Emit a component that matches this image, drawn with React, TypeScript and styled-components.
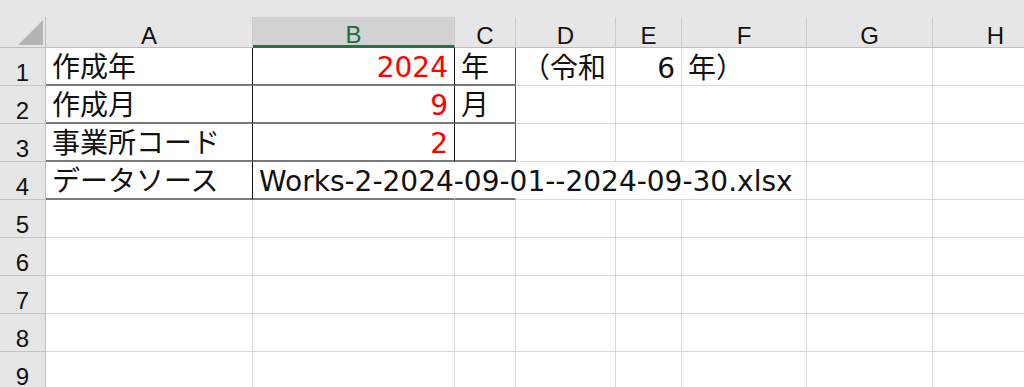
import React from 'react';
import styled, {createGlobalStyle, css} from "styled-components";

const GlobalStyle = createGlobalStyle`
  html, body {
    margin: 0;
    padding: 0;
    background: #ffffff;
    overflow: hidden;
  }
`

type Edge = "grid" | "black" | "dark" | "none" | "thick"

type CellDef = {
  text?: string
  align?: "left" | "right"
  red?: boolean
  r?: Edge
  b?: Edge
  spill?: boolean
}

const columns = ["A", "B", "C", "D", "E", "F", "G", "H"];
// H runs past the window edge, the window clips it
const colWidths = "46px 207px 202px 61px 100px 66px 125px 126px 126px";
const selectedCol = "B";

// only rows 1-4 carry content, the rest is empty grid
const rows: Record<number, CellDef[]> = {
  1: [
    {text: "作成年", r: "black", b: "thick"},
    {text: "2024", align: "right", red: true, r: "black", b: "thick"},
    {text: "年", r: "dark", b: "thick"},
    {text: "（令和"},
    {text: "6", align: "right"},
    {text: "年）"},
  ],
  2: [
    {text: "作成月", r: "black", b: "thick"},
    {text: "9", align: "right", red: true, r: "black", b: "thick"},
    {text: "月", r: "dark", b: "thick"},
  ],
  3: [
    {text: "事業所コード", r: "black", b: "thick"},
    {text: "2", align: "right", red: true, r: "black", b: "thick"},
    {text: "", r: "dark", b: "thick"},
  ],
  4: [
    {text: "データソース", r: "black", b: "thick"},
    {text: "Works-2-2024-09-01--2024-09-30.xlsx", spill: true, r: "none", b: "thick"},
    {r: "none", b: "thick"},
    {r: "none"},
    {r: "none"},
    {},
  ],
};

const App = () => {
  const rowNums = [1, 2, 3, 4, 5, 6, 7, 8, 9];

  return (
    <>
      <GlobalStyle/>
      <Window>
        <TopStrip/>
        <Sheet>
          <Corner>
            <CornerMark/>
          </Corner>
          {columns.map((c) => (
            <ColHead key={c} $selected={c === selectedCol}>{c}</ColHead>
          ))}

          {rowNums.map((n) => {
            const defs = rows[n] || [];
            return (
              <React.Fragment key={n}>
                <RowHead>{n}</RowHead>
                {columns.map((c, i) => {
                  const d = defs[i] || {};
                  return (
                    <Cell
                      key={c + n}
                      $align={d.align || "left"}
                      $red={!!d.red}
                      $r={d.r || "grid"}
                      $b={d.b || "grid"}
                      $spill={!!d.spill}
                    >
                      {d.text}
                    </Cell>
                  );
                })}
              </React.Fragment>
            );
          })}
        </Sheet>
      </Window>
    </>
  );
};

const edgeColor = (e: Edge) => {
  switch (e) {
    case "black": return "1px solid #111111";
    case "dark": return "1px solid #555555";
    case "thick": return "2px solid #7a7a7a";
    case "none": return "1px solid transparent";
    default: return "1px solid #d9d9d9";
  }
}

const Window = styled.div`
  width: 1024px;
  height: 387px;
  overflow: hidden;
  background: #ffffff;
`

const TopStrip = styled.div`
  height: 17px;
  background: #e6e6e6;
`

const Sheet = styled.div`
  display: grid;
  grid-template-columns: ${colWidths};
  grid-template-rows: 31px;
  grid-auto-rows: 38px;
`

const Corner = styled.div`
  position: relative;
  background: #e6e6e6;
  border-right: 1px solid #bdbdbd;
  border-bottom: 1px solid #bdbdbd;
  box-sizing: border-box;
`

const CornerMark = styled.div`
  position: absolute;
  right: 2px;
  bottom: 2px;
  width: 25px;
  height: 25px;
  background: #b4b4b4;
  clip-path: polygon(100% 0, 100% 100%, 0 100%);
`

const ColHead = styled.div<{ $selected: boolean }>`
  box-sizing: border-box;
  display: flex;
  align-items: flex-end;
  justify-content: center;
  padding-bottom: 1px;
  font-family: "Liberation Sans", Arial, sans-serif;
  font-size: 24px;
  line-height: 21px;
  color: #111111;
  background: #e6e6e6;
  border-right: 1px solid #cbcbcb;
  border-bottom: 1px solid #bdbdbd;

  ${(p) => p.$selected && css`
    background: #d2d2d2;
    color: #1f6b41;
    border-bottom: 3px solid #217346;
    padding-bottom: 0;
  `}
`

const RowHead = styled.div`
  box-sizing: border-box;
  display: flex;
  align-items: flex-end;
  justify-content: center;
  padding-bottom: 1px;
  font-family: "Liberation Sans", Arial, sans-serif;
  font-size: 24px;
  line-height: 22px;
  color: #111111;
  background: #e6e6e6;
  border-right: 1px solid #bdbdbd;
  border-bottom: 1px solid #c4c4c4;
`

const Cell = styled.div<{ $align: string; $red: boolean; $r: Edge; $b: Edge; $spill: boolean }>`
  box-sizing: border-box;
  display: flex;
  align-items: flex-end;
  justify-content: ${(p) => (p.$align === "right" ? "flex-end" : "flex-start")};
  padding: 0 6px 1px 6px;
  min-width: 0;
  font-family: "DejaVu Sans", "Noto Sans CJK JP", sans-serif;
  font-size: 28px;
  line-height: 30px;
  color: ${(p) => (p.$red ? "#ff0000" : "#111111")};
  white-space: nowrap;
  background: #ffffff;
  border-right: ${(p) => edgeColor(p.$r)};
  border-bottom: ${(p) => edgeColor(p.$b)};
  overflow: ${(p) => (p.$spill ? "visible" : "hidden")};
  position: ${(p) => (p.$spill ? "relative" : "static")};
  z-index: ${(p) => (p.$spill ? 2 : "auto")};
`

export default App;
